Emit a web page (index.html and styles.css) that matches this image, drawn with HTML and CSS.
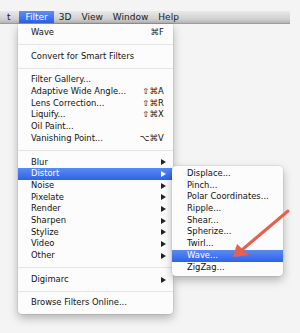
FILE: index.html
```html
<!DOCTYPE html>
<html>
<head>
<meta charset="utf-8">
<link rel="stylesheet" href="styles.css">
</head>
<body>
<div class="menubar">
  <span class="mb-item mb-edit">t</span>
  <span class="mb-item mb-active">Filter</span>
  <span class="mb-item">3D</span>
  <span class="mb-item">View</span>
  <span class="mb-item">Window</span>
  <span class="mb-item">Help</span>
</div>
<div class="dropdown">
  <div class="menu">
    <div class="row"><span>Wave</span><span class="key">⌘F</span></div>
    <div class="sep"></div>
    <div class="row"><span>Convert for Smart Filters</span></div>
    <div class="sep"></div>
    <div class="row"><span>Filter Gallery...</span></div>
    <div class="row"><span>Adaptive Wide Angle...</span><span class="key">⇧⌘A</span></div>
    <div class="row"><span>Lens Correction...</span><span class="key">⇧⌘R</span></div>
    <div class="row"><span>Liquify...</span><span class="key">⇧⌘X</span></div>
    <div class="row"><span>Oil Paint...</span></div>
    <div class="row"><span>Vanishing Point...</span><span class="key">⌥⌘V</span></div>
    <div class="sep"></div>
    <div class="row sub"><span>Blur</span><span class="tri"></span></div>
    <div class="row sub hl"><span>Distort</span><span class="tri"></span></div>
    <div class="row sub"><span>Noise</span><span class="tri"></span></div>
    <div class="row sub"><span>Pixelate</span><span class="tri"></span></div>
    <div class="row sub"><span>Render</span><span class="tri"></span></div>
    <div class="row sub"><span>Sharpen</span><span class="tri"></span></div>
    <div class="row sub"><span>Stylize</span><span class="tri"></span></div>
    <div class="row sub"><span>Video</span><span class="tri"></span></div>
    <div class="row sub"><span>Other</span><span class="tri"></span></div>
    <div class="sep"></div>
    <div class="row sub"><span>Digimarc</span><span class="tri"></span></div>
    <div class="sep"></div>
    <div class="row"><span>Browse Filters Online...</span></div>
  </div>
  <div class="submenu">
    <div class="row"><span>Displace...</span></div>
    <div class="row"><span>Pinch...</span></div>
    <div class="row"><span>Polar Coordinates...</span></div>
    <div class="row"><span>Ripple...</span></div>
    <div class="row"><span>Shear...</span></div>
    <div class="row"><span>Spherize...</span></div>
    <div class="row"><span>Twirl...</span></div>
    <div class="row hl"><span>Wave...</span></div>
    <div class="row"><span>ZigZag...</span></div>
  </div>
</div>
<svg class="arrow" width="300" height="333" viewBox="0 0 300 333">
  <line x1="288" y1="211" x2="243" y2="249" stroke="#e8604c" stroke-width="3" stroke-linecap="round"/>
  <polygon points="233,257 237,244 249,255" fill="#e8604c"/>
</svg>
</body>
</html>
```

FILE: styles.css
```css
html, body {
  margin: 0;
  padding: 0;
}
body {
  background: #f4f4f4;
  width: 300px;
  height: 333px;
  overflow: hidden;
  position: relative;
  font-family: "DejaVu Sans", sans-serif;
  color: #111;
}
.menubar {
  margin-top: 11px;
  width: 290px;
  height: 13px;
  display: flex;
  align-items: stretch;
  overflow: hidden;
  background: linear-gradient(#e9e9e9, #cfcfcf 70%, #b4b4b4);
  border-bottom: 1px solid #9c9c9c;
  box-sizing: border-box;
  font-size: 9px;
  line-height: 12px;
}
.mb-item {
  padding: 0 5px;
  color: #1a1a1a;
  white-space: nowrap;
}
.mb-edit {
  padding: 0 0 0 7px;
  margin-right: 8px;
}
.mb-active {
  background: linear-gradient(#5f8ef2, #2d62e6);
  color: #fff;
  padding: 0 6px 0 7px;
}
.dropdown {
  position: relative;
  margin-left: 18px;
  width: 155px;
}
.menu {
  background: #fcfcfc;
  padding: 3px 0 5px;
  border-radius: 0 0 4px 4px;
  box-shadow: 0 4px 10px rgba(0, 0, 0, 0.28), 0 0 0 0.5px rgba(0, 0, 0, 0.12);
  font-size: 8.4px;
}
.row {
  height: 11.7px;
  line-height: 11.7px;
  display: flex;
  justify-content: space-between;
  align-items: center;
  padding: 0 9px 0 13px;
  white-space: nowrap;
}
.row.sub {
  padding-right: 7px;
}
.key {
  font-size: 8.4px;
  letter-spacing: 0.2px;
}
.tri {
  width: 0;
  height: 0;
  border-top: 3px solid transparent;
  border-bottom: 3px solid transparent;
  border-left: 5px solid #222;
}
.hl {
  background: linear-gradient(#5b8bf1, #2e63e7);
  color: #fff;
}
.hl .tri {
  border-left-color: #fff;
}
.sep {
  height: 12px;
  display: flex;
  align-items: center;
}
.sep::before {
  content: "";
  flex: 1;
  height: 1px;
  background: #e4e4e4;
}
.submenu {
  position: absolute;
  left: 154px;
  top: 142px;
  width: 111px;
  background: #fcfcfc;
  padding: 2px 0 3px;
  border-radius: 4px;
  box-shadow: 0 4px 10px rgba(0, 0, 0, 0.28), 0 0 0 0.5px rgba(0, 0, 0, 0.12);
  font-size: 8.4px;
}
.submenu .row {
  padding-left: 15px;
}
.arrow {
  position: absolute;
  left: 0;
  top: 0;
  pointer-events: none;
}
```
